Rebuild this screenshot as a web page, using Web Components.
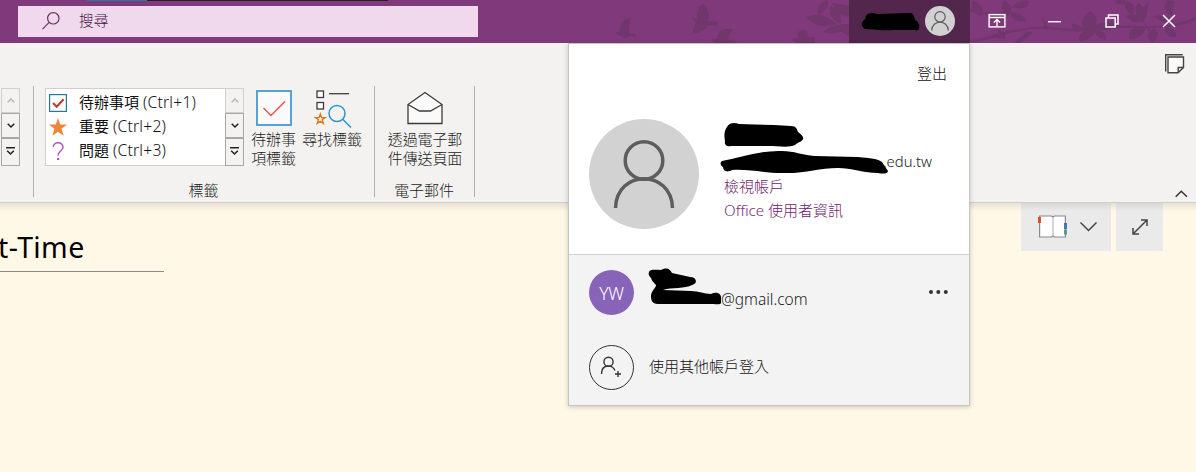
<!DOCTYPE html>
<html lang="zh-Hant">
<head>
<meta charset="utf-8">
<title>OneNote</title>
<style>
html,body{margin:0;height:100%;overflow:hidden}
body{font-family:"Noto Sans","Noto Sans CJK TC",sans-serif;font-size:15px;color:#111;background:#fff8e7}
</style>
</head>
<body>
<note-app></note-app>
<script>
const define = (name, css, html) => customElements.define(name, class extends HTMLElement {
  constructor() {
    super();
    const t = document.createElement('template');
    t.innerHTML = `<style>*{box-sizing:border-box}svg{display:block;overflow:visible}${css}</style>${html}`;
    this.attachShadow({mode: 'open'}).append(t.content.cloneNode(true));
  }
});

define('search-box', `
:host{display:flex;align-items:center;width:460px;height:31px;margin:6px 0 0 18px;background:#f0d9ed;color:#4a1046;font-size:14.7px;position:relative}
svg{margin-left:24px}span{margin-left:18px;line-height:20px;position:relative;top:-2px;font-weight:300}`, `
<svg width="19" height="19" fill="none" stroke="#6b3366" stroke-width="1.2"><circle cx="11.3" cy="6.3" r="5.7"/><path d="M7.2 10.4L.5 17.2"/></svg><span><slot></slot></span>`);

define('title-art', `:host{position:absolute;inset:0;overflow:hidden}`, `
<svg width="1196" height="43" fill="#71366b">
<path d="M631 17c-7 1-12 9-11 14l-5 2 6 3c3 3 7 2 9 0l6 2-1-4-6-1c0-5 0-10 2-16z"/>
<path d="M703 4c-6 4-6 9-6 15l-5-1 4 5c-2 4-4 7-3 11 7-2 13-4 15-9l9 1 1-4-10-1c2-7 0-13-5-17z"/>
<path d="M733 29c-10-1-15 2-16 9l-6 2 4 3h22l-1-2-8-1c0-4 3-7 5-11z"/>
<path d="M807 31c-5-3-11 0-9 7l-6 1 4 4h19v-6l-7 0z"/>
<path d="M827 0c-7 2-11 8-9 15 8-4 11-9 10-15zM806 17c11-4 22-2 30 7-12 4-22 2-30-7zM830 6c-1 9 3 15 11 18 2-9-3-15-11-18zM832 3l17 3v11c-8-1-13-6-17-14zM823 32c7-6 15-8 26-8-4 8-14 12-26 8zM849 25v11l-9-5z"/>
<path d="M970 40c15-1 22-6 38-9 17-3 28-5 42-4 20 2 34 4 60 0 28-4 51 5 86-10l-1 3c-27 13-56 5-83 9-28 4-48 2-63 0-20-1-37 3-51 7-11 4-19 6-28 6z"/>
<path d="M970 9c15 5 26 5 41 2l-1 2c-15 4-27 2-40-2z"/>
<path d="M972 0c-2 9 2 14 9 16 4-8 0-13-9-16zM1004 0c-4 6-3 11 4 16 6-6 3-12-4-16zM1012 7c6-6 12-8 17-5-1 6-8 8-17 5zM987 14c8-1 14 3 15 9-8 1-13-2-15-9zM1009 12c9 0 15 3 17 9-8 2-14-1-17-9z"/>
<path d="M1090 11c-7 5-10 12-6 17l-12-5c-2 7 5 10 13 8-6 4-8 8-4 11 10-3 14-7 14-14 9 3 16 1 21-4-8-2-15-2-20 1 2-6-1-10-6-14z"/>
<path d="M1094 29c8 1 13 5 12 11-7-1-12-5-12-11zM1115 28l2-10 3 9zM1045 29l-3-12 7 11zM1027 32l-13 11h7l12-11zM1005 34l-7-5v6l-7 2 14 2z"/>
<path d="M1115 2c5-4 10-4 13-1-4 4-8 5-13 1zM1126 0c-3 6 0 12 6 15 5-7 2-11-6-15zM1126 16c7-3 15-1 19 4-8 4-15 2-19-4zM1149 2l-3 17c-6-6-5-12 3-17zM1144 22c-10-6-11-13-5-19 7 7 8 12 5 19zM1167 0c-4 7-2 12 5 17l2-16zM1155 16c9-2 16 0 19 6-8 2-15 0-19-6z"/>
<path d="M1146 26c-12 0-19 5-17 13 10 0 16-5 17-13zM1154 28c-8 5-8 11-1 15 6-6 6-11 1-15zM1165 27c8 1 13 5 11 10-7 1-11-3-11-10zM1141 19l10 11-2 2z"/>
</svg>`);

define('account-button', `
:host{display:flex;align-items:center;width:121px;height:43px;background:#52264d;padding-left:13px;position:relative}
.a{margin-left:4px;position:relative;top:-1px}`, `
<svg width="59" height="18"><path d="M4 3C5 0 10-1 15 1L48 0c3 0 3 2 4 3l1 4c4 2 5 6 4 9-1 2-3 1-5 1H31C20 18 9 16 3 16c-4-2-4-7-1-9 2-1 1-2 2-4z"/></svg>
<svg class="a" width="30" height="30"><circle cx="15" cy="15" r="15" fill="#d1d1d1"/><g fill="none" stroke="#5c5c5c" stroke-width="1.2"><circle cx="15" cy="10.800" r="5.200"/><path d="M6.700 24.500c.2-11 16.400-11 16.600 0"/></g></svg>`);

define('window-controls', `
:host{display:grid;grid-template-columns:56px 58px 56px 56px;align-items:center;justify-items:center;width:226px;height:42px;position:relative}`, `
<svg width="18" height="14" fill="none" stroke="#fff" stroke-width="1.4" style="margin-right:3px"><rect x="1.1" y=".6" width="15.8" height="12.3"/><path d="M1 3.5h16M9 12V5.5M5.8 8.5L9 5.4l3.2 3.1"/></svg>
<svg width="14" height="14" style="margin-right:2px"><rect x="1" y="7" width="13" height="1.4" fill="#fff"/></svg>
<svg width="14" height="14" fill="none" stroke="#fff" stroke-width="1.5"><rect x="1" y="4" width="9.2" height="9"/><path d="M3.500 4V1h9.500v9h-2.500"/></svg>
<svg width="12" height="12" fill="none" stroke="#fff" stroke-width="1.5" style="margin-left:2px"><path d="M0 0l12 12M12 0L0 12"/></svg>`);

define('title-bar', `
:host{display:flex;height:43px;background:#80397b;position:relative}
.tab{position:absolute;left:87px;top:0;width:301px;height:1px;background:linear-gradient(90deg,#28799c 60px,#222 60px)}
.gap{flex:1}`, `
<title-art></title-art><div class="tab"></div><search-box>搜尋</search-box><div class="gap"></div><account-button></account-button><window-controls></window-controls>`);

define('scroll-stack', `
:host{display:flex;flex-direction:column;width:19px;height:78px}
div{flex:1;display:grid;place-items:center;border:1px solid #a9a8a7;background:#f3f2f1}
div:first-of-type{border-color:#d0cfce}svg{fill:none;stroke:#222;stroke-width:1.5}div:first-of-type svg{stroke:#b5b5b5}`, `
<div><svg width="8" height="5"><path d="M.7 4.2L4 1l3.3 3.2"/></svg></div>
<div><svg width="8" height="5"><path d="M.7 .7L4 4 7.3 .7"/></svg></div>
<div style="padding-bottom:3px"><svg width="9" height="8"><path d="M0 .7h9M1.2 3.700L4.500 7l3.300-3.300"/></svg></div>`);

define('tag-row', `
:host{display:flex;align-items:center;height:24px;color:#111}
.i{width:18px;height:18px;margin:0 13px 0 3px}span{white-space:nowrap;line-height:24px;position:relative;top:-1px;left:-1px}
b{font-weight:360;font-size:15.700px;letter-spacing:.2px}`, `
<div class="i"><slot name="icon"></slot></div><span><slot></slot> <b><slot name="key"></slot></b></span>`);

define('tag-gallery', `
:host{display:flex;width:199px;height:78px}
.l{width:180px;border:1px solid #d0cfce;border-right:0;background:#fff;padding-top:2px}`, `
<div class="l">
<tag-row><svg slot="icon" width="18" height="18"><rect x=".6" y=".6" width="16.8" height="16.8" fill="#fff" stroke="#247a9b" stroke-width="1.2"/><path d="M4 9l3.7 3.7L14.6 5.3" fill="none" stroke="#c53b2e" stroke-width="2.2"/></svg>待辦事項<span slot="key">(Ctrl+1)</span></tag-row>
<tag-row><svg slot="icon" width="18" height="18"><path d="M9 0l2.2 6.6H18l-5.5 4.2 2.1 7L9 13.7l-5.600 4.100 2.100-7L0 6.600h6.800z" fill="#ee8434"/></svg>重要<span slot="key">(Ctrl+2)</span></tag-row>
<tag-row><svg slot="icon" width="18" height="18"><path d="M4.300 5c0-5.500 9.700-5.700 9.700 0 0 4-5 4-5 8.500" fill="none" stroke="#ae58bc" stroke-width="1.500"/><rect x="8" y="16" width="2.200" height="2" fill="#ae58bc"/></svg>問題<span slot="key">(Ctrl+3)</span></tag-row>
</div><scroll-stack></scroll-stack>`);

define('ribbon-button', `
:host{display:flex;flex-direction:column;align-items:center;color:#1c1c1c;font-weight:300;line-height:19px;text-align:center;letter-spacing:-.1px;white-space:nowrap}
.i{height:44px;padding-top:4px}`, `<div class="i"><slot name="icon"></slot></div><div><slot></slot></div>`);

define('ribbon-group', `
:host{display:flex;flex-direction:column;height:111px;border-right:1px solid #b1b0af}
.c{display:flex;height:94px;flex:none}.n{text-align:center;line-height:20px;color:#1c1c1c;font-weight:300;letter-spacing:-.1px;padding-right:1px}`, `
<div class="c"><slot></slot></div><div class="n"><slot name="label"></slot></div>`);

define('ribbon-bar', `
:host{display:flex;height:160px;background:#f3f2f1;border-bottom:1px solid #cfcecd;padding-top:43px;position:relative}
.left{width:34px;height:111px;border-right:1px solid #b1b0af;padding:2px 0 0 1px}
.tags{width:341px}.mail{width:100px}
tag-gallery{margin:2px 0 0 11px}.todo{width:45px;margin-left:7px}.find{width:60px;margin-left:6px}.send{width:76px;margin-left:12px}
.side{margin-left:auto;width:32px;display:flex;flex-direction:column;justify-content:space-between;margin-top:-32px;padding:0 9px 4px 0;align-items:flex-start}`, `
<div class="left"><scroll-stack></scroll-stack></div>
<ribbon-group class="tags"><tag-gallery></tag-gallery>
<ribbon-button class="todo"><svg slot="icon" width="36" height="36"><rect x="1" y="1" width="34" height="34" fill="#fafafa" stroke="#3995cf" stroke-width="1.700"/><path d="M7.500 18l7.500 7.500L29 11.500" fill="none" stroke="#ed5353" stroke-width="1.500"/></svg>待辦事<br>項標籤</ribbon-button>
<ribbon-button class="find"><svg slot="icon" width="36" height="38" viewBox="-1 0 36 38" fill="none" stroke="#3d3d3d" stroke-width="1.300"><rect x="2" y="1" width="6.500" height="6.500" fill="#fff"/><rect x="2" y="12.500" width="6.500" height="6.500" fill="#fff"/><path d="M14 3.700h20"/><path d="M5.300 24l1.200 3.600h3.700l-3 2.200 1.200 3.700-3.100-2.200-3.100 2.200 1.200-3.700-3-2.200h3.700z" stroke="#d97816"/><g stroke="#2e93d1" stroke-width="1.500"><circle cx="22" cy="23.500" r="8"/><path d="M27.700 29.200l8.300 8.300"/></g></svg>尋找標籤</ribbon-button>
<span slot="label">標籤</span></ribbon-group>
<ribbon-group class="mail"><ribbon-button class="send"><svg slot="icon" width="36" height="36" fill="#fafafa" stroke="#3b3b3b" stroke-width="1.300"><path d="M1 14.500v19h34v-19L18 2.500z"/><path d="M1 14.500l11.500 6.500h11L35 14.500" fill="none"/></svg>透過電子郵<br>件傳送頁面</ribbon-button><span slot="label">電子郵件</span></ribbon-group>
<div class="side"><svg style="margin-left:1px" width="20" height="20" fill="none" stroke="#444" stroke-width="1.400"><path d="M.700 17.500V.700h17" /><path d="M3 18V3h15.500v10.500L13 18.700H3z" fill="#fafafa"/><path d="M13.200 18.500v-5h5.200"/></svg>
<svg style="margin-left:11px" width="13" height="8" fill="none" stroke="#333" stroke-width="1.500"><path d="M.700 6.800l5.600-5.500 5.600 5.500"/></svg></div>`);

define('page-canvas', `
:host{display:flex;justify-content:space-between;height:269px;background:linear-gradient(#e8e1d2,#fff8e7 8px)}
.t{width:164px;height:69px;border-bottom:1px solid #8b8b84;color:#000;font-size:28.500px;line-height:40px;padding-top:24px;white-space:nowrap}
.t span{display:block;margin-left:-2px;letter-spacing:.4px}
.tools{display:flex;gap:5px;margin-right:33px}.b{height:48px;background:linear-gradient(#d8d7d6,#eaeaea 8px);display:flex;align-items:center}`, `
<div class="t"><span>t-Time</span></div>
<div class="tools"><div class="b" style="width:90px;padding-left:17px;gap:13px">
<svg width="29" height="23" style="margin-top:-2px"><path d="M1.600 1h11.900l1.500 1 1.500-1h10.900v21H16.500L15 21l-1.500 1H1.600z" fill="#fff" stroke="#8a8a8a" stroke-width="1.200"/><path d="M15 2v19" stroke="#aaa"/><path d="M0 2h3v6H0z" fill="#d6502f"/><path d="M26 8h3v6h-3z" fill="#3f79b9"/><path d="M26 14.500h3v5h-3z" fill="#58a08d"/></svg>
<svg width="17" height="10" fill="none" stroke="#444" stroke-width="1.500"><path d="M.500.500l8 8 8-8"/></svg></div>
<div class="b" style="width:47px;justify-content:center"><svg width="16" height="16" fill="none" stroke="#444" stroke-width="1.500" style="margin-top:-1px"><path d="M1 15L15 1M9 1h6v6M1 9v6h6"/></svg></div></div>`);

define('account-current', `
:host{display:grid;grid-template-columns:110px 1fr;column-gap:25px;height:211px;background:#fff;border-bottom:1px solid #cfcfcf;padding:19px 20px 0;align-content:start;font-weight:300}
.out{grid-column:1/3;text-align:right;line-height:20px;height:56px;padding-right:2px}
.info{display:flex;flex-direction:column;padding-top:4px;line-height:24px;white-space:nowrap}
.mail{display:flex;height:26px;margin-left:-3px;align-items:flex-start;padding-top:1px}.mail svg{margin-top:1px}.mail span{font-weight:350;font-size:14.800px;margin-left:-5px;line-height:22px;color:#222}.p{color:#6e2269}`, `
<div class="out">登出</div>
<svg width="110" height="110"><circle cx="55" cy="55" r="55" fill="#d2d2d2"/><g fill="none" stroke="#5d5d5d" stroke-width="3.500"><circle cx="55" cy="41.500" r="18.800"/><path d="M26.500 89c1-39 56-39 57 0"/></g></svg>
<div class="info"><svg width="80" height="26"><path d="M3 4C5 0 10-1 15 1l35 1 17 1c5 0 6 3 7 6 3 2 6 5 5 7-1 3-5 3-8 6-6 3-17 1-27 1L7 23c-4 1-7-1-6-5-1-5-1-10 2-14z"/></svg>
<div class="mail"><svg width="167" height="23" viewBox="0 0 167 23"><path d="M1 10C18 7 40-1 61 0c13 0 19 4 33 5l43 1c12 1 20 2 24 5l6 9c0 3-6 3-10 2-14 0-27-5-40-5-19 0-34 6-56 5-18 0-33-4-50-3-5 3-9 1-9-3-3-1-3-5-1-6z"/></svg><span>.edu.tw</span></div>
<div class="p" style="line-height:23px">檢視帳戶</div><div class="p" style="line-height:25px"><span style="font-weight:350;font-size:15.200px;color:#7a2f75">Office</span> 使用者資訊</div></div>`);

define('account-others', `
:host{display:flex;flex-direction:column;gap:30px;height:150px;background:#f3f3f3;padding:15px 20px;font-weight:300}
.r{display:flex;align-items:center;height:45px;gap:15px}.r>div:last-child{position:relative;top:-2px}
.yw{width:45px;height:45px;border-radius:50%;background:#8764b8;color:#fff;display:grid;place-items:center;font-size:17.500px;font-weight:350;letter-spacing:-.3px}
.m{display:flex;align-items:flex-start;height:45px}.m span{margin:19px 0 0 0;line-height:20px;font-weight:350;font-size:15.500px;color:#222}.r>div.d{margin-left:auto;top:-1px}`, `
<div class="r"><div class="yw">YW</div><div class="m"><svg width="72" height="37"><path d="M0 2C1-1 6 0 12 0c6-3 9-1 11 3l18 4c7 0 8 7 2 8-7 4-20 2-29 5l28 1c8 0 13 3 20 3 6-3 11 0 10 5v4c0 2-6 1-8 1H9c-6 0-7-4-7-8 0-5 5-8 5-11-3-3-4-4-5-7-2-2-3-4-2-6z"/></svg><span>@gmail.com</span></div>
<div class="d"><svg width="20" height="4" fill="#333"><circle cx="2" cy="2" r="2"/><circle cx="9.300" cy="2" r="2"/><circle cx="16.800" cy="2" r="2"/></svg></div></div>
<div class="r"><svg width="45" height="45" fill="none" stroke="#333"><circle cx="22.500" cy="22.500" r="22"/><g stroke-width="1.400"><circle cx="19.500" cy="16.800" r="4.600"/><path d="M12.500 29c0-10 11-10 13.500-3.500M29 26v6M26 29h6"/></g></svg><div>使用其他帳戶登入</div></div>`);

define('account-flyout', `
:host{position:absolute;left:568px;top:43px;width:402px;height:363px;border:1px solid #c4c4c4;box-shadow:0 1px 5px #0003;display:block}`, `<account-current></account-current><account-others></account-others>`);

define('note-app', `:host{display:flex;flex-direction:column;width:1196px;height:472px;position:relative;overflow:hidden}`, `
<title-bar></title-bar><ribbon-bar></ribbon-bar><page-canvas></page-canvas><account-flyout></account-flyout>`);
</script>
</body>
</html>
